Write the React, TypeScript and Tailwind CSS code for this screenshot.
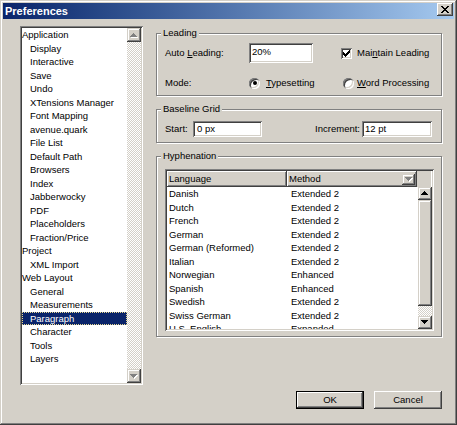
import React from "react";

const raised =
  "bg-[#d4d0c8] shadow-[inset_-1px_-1px_#404040,inset_1px_1px_#ffffff,inset_-2px_-2px_#808080,inset_2px_2px_#d4d0c8]";
const scrollBtn =
  "bg-[#d4d0c8] shadow-[inset_-1px_-1px_#404040,inset_1px_1px_#d4d0c8,inset_-2px_-2px_#808080,inset_2px_2px_#ffffff]";
const sunken =
  "shadow-[inset_1px_1px_#808080,inset_-1px_-1px_#ffffff,inset_2px_2px_#404040,inset_-2px_-2px_#d4d0c8]";
const dither =
  "bg-[image:repeating-conic-gradient(#ffffff_0%_25%,#d4d0c8_0%_50%)] bg-[length:2px_2px]";

function Arrow({ dir, disabled }: { dir: "up" | "down"; disabled?: boolean }) {
  const pts = dir === "up" ? "3.5,0 7,4 0,4" : "0,0 7,0 3.5,4";
  return (
    <svg width="8" height="5" viewBox="0 0 8 5" shapeRendering="crispEdges">
      {disabled && <polygon points={pts} transform="translate(1,1)" fill="#ffffff" />}
      <polygon points={pts} fill={disabled ? "#808080" : "#000000"} />
    </svg>
  );
}

function Group({
  title,
  className,
  innerClassName,
  children,
}: {
  title: string;
  className: string;
  innerClassName: string;
  children: React.ReactNode;
}) {
  return (
    <div
      className={
        "mt-[6px] border border-[#808080] shadow-[1px_1px_0_#ffffff,inset_1px_1px_0_#ffffff] " +
        className
      }
    >
      <div className="-mt-[7px] ml-[4px] px-[2px] w-fit bg-[#d4d0c8] leading-[12px]">{title}</div>
      <div className={innerClassName}>{children}</div>
    </div>
  );
}

function Checkbox() {
  return (
    <div className={"w-[11px] h-[11px] bg-white flex items-center justify-center " + sunken}>
      <svg width="7" height="7" viewBox="0 0 7 7" shapeRendering="crispEdges">
        <path d="M0 2h1v1h1v1h1V3h1V2h1V1h1V0h1v3H6v1H5v1H4v1H3v1H2V6H1V5H0z" fill="#000" />
      </svg>
    </div>
  );
}

function Radio({ checked }: { checked?: boolean }) {
  return (
    <div
      className={
        "w-[11px] h-[11px] rounded-full bg-white flex items-center justify-center " + sunken
      }
    >
      {checked && <div className="w-[4px] h-[4px] rounded-full bg-black" />}
    </div>
  );
}

const treeItems: [string, boolean][] = [
  ["Application", false],
  ["Display", true],
  ["Interactive", true],
  ["Save", true],
  ["Undo", true],
  ["XTensions Manager", true],
  ["Font Mapping", true],
  ["avenue.quark", true],
  ["File List", true],
  ["Default Path", true],
  ["Browsers", true],
  ["Index", true],
  ["Jabberwocky", true],
  ["PDF", true],
  ["Placeholders", true],
  ["Fraction/Price", true],
  ["Project", false],
  ["XML Import", true],
  ["Web Layout", false],
  ["General", true],
  ["Measurements", true],
  ["Paragraph", true],
  ["Character", true],
  ["Tools", true],
  ["Layers", true],
];

const hyph: [string, string][] = [
  ["Danish", "Extended 2"],
  ["Dutch", "Extended 2"],
  ["French", "Extended 2"],
  ["German", "Extended 2"],
  ["German (Reformed)", "Extended 2"],
  ["Italian", "Extended 2"],
  ["Norwegian", "Enhanced"],
  ["Spanish", "Enhanced"],
  ["Swedish", "Extended 2"],
  ["Swiss German", "Extended 2"],
  ["U.S. English", "Expanded"],
];

export default function App() {
  return (
    <div className="w-[457px] h-[425px] bg-[#d4d0c8] p-[3px] flex flex-col font-['Liberation_Sans',Arial,sans-serif] text-[9.5px] text-black leading-[13.5px] overflow-hidden select-none shadow-[inset_-1px_-1px_#404040,inset_1px_1px_#d4d0c8,inset_-2px_-2px_#808080,inset_2px_2px_#ffffff]">
      {/* Title bar */}
      <div className="h-[16px] shrink-0 flex items-start justify-between bg-linear-to-r from-[#0a246a] to-[#a6caf0] pl-[2px] pr-[1px]">
        <span className="text-white font-bold text-[11px] leading-[16px]">Preferences</span>
        <div className={"w-[16px] h-[13px] flex items-center justify-center " + raised}>
          <svg width="8" height="7" viewBox="0 0 8 7" shapeRendering="crispEdges">
            <path
              d="M0 0h2v1h1v1h2V1h1V0h2v1H7v1H6v1H5v1h1v1h1v1h1v1H6V6H5V5H3v1H2v1H0V6h1V5h1V4h1V3H2V2H1V1H0z"
              fill="#000"
            />
          </svg>
        </div>
      </div>

      {/* Body */}
      <div className="flex-1 flex flex-col pl-[17px] pr-[12px] pt-[7px]">
        <div className="flex gap-[13px]">
          {/* Tree list */}
          <div className={"w-[123px] h-[359px] shrink-0 bg-white p-[2px] flex " + sunken}>
            <div className="flex-1 overflow-hidden">
              {treeItems.map(([label, indent]) => {
                const sel = label === "Paragraph";
                return (
                  <div
                    key={label}
                    className={
                      "h-[13.5px] whitespace-nowrap " +
                      (indent ? "pl-[8px] " : "pl-0 ") +
                      (sel
                        ? "bg-[#0a246a] text-white outline-1 outline-dotted outline-[#e8d890] -outline-offset-1"
                        : "")
                    }
                  >
                    {label}
                  </div>
                );
              })}
            </div>
            <div className={"w-[14px] flex flex-col " + dither}>
              <div className={"h-[14px] flex items-center justify-center " + scrollBtn}>
                <Arrow dir="up" disabled />
              </div>
              <div className="flex-1" />
              <div className={"h-[14px] flex items-center justify-center " + scrollBtn}>
                <Arrow dir="down" disabled />
              </div>
            </div>
          </div>

          {/* Right column */}
          <div className="w-[286px] mt-[1px] flex flex-col gap-[7px]">
            <Group title="Leading" className="pb-[5px]" innerClassName="pt-[4px] pl-[8px]">
              <div className="grid grid-cols-[84px_92px_1fr] items-center h-[20px]">
                <span>
                  Auto <span className="underline">L</span>eading:
                </span>
                <div className={"w-[64px] h-[20px] bg-white pl-[3px] pt-[2px] " + sunken}>20%</div>
                <div className="flex items-center gap-[5px]">
                  <Checkbox />
                  <span>
                    Mai<span className="underline">n</span>tain Leading
                  </span>
                </div>
              </div>
              <div className="grid grid-cols-[84px_94px_1fr] items-center mt-[13px] h-[14px]">
                <span>Mode:</span>
                <div className="flex items-center gap-[6px]">
                  <Radio checked />
                  <span>
                    <span className="underline">T</span>ypesetting
                  </span>
                </div>
                <div className="flex items-center gap-[3px]">
                  <Radio />
                  <span>
                    <span className="underline">W</span>ord Processing
                  </span>
                </div>
              </div>
            </Group>

            <Group title="Baseline Grid" className="pb-[5px]" innerClassName="pt-[6px] pl-[8px] pr-[9px]">
              <div className="flex items-center h-[16px]">
                <span className="w-[28px]">Start:</span>
                <div className={"w-[69px] h-[16px] bg-white pl-[4px] leading-[16px] " + sunken}>
                  0 px
                </div>
                <span className="ml-auto mr-[2px]">Increment:</span>
                <div className={"w-[70px] h-[16px] bg-white pl-[3px] leading-[16px] " + sunken}>
                  12 pt
                </div>
              </div>
            </Group>

            <Group title="Hyphenation" className="pb-[5px]" innerClassName="pt-[7px] pl-[8px] pr-[7px]">
              <div className={"h-[162px] bg-white p-[2px] flex flex-col " + sunken}>
                <div className="h-[16px] shrink-0 flex">
                  <div className={"w-[120px] pl-[2px] leading-[16px] " + raised}>Language</div>
                  <div className={"w-[130px] pl-[2px] flex items-center justify-between pr-[2px] " + raised}>
                    <span className="leading-[16px]">Method</span>
                    <div className={"w-[13px] h-[11px] flex items-center justify-center " + scrollBtn}>
                      <Arrow dir="down" disabled />
                    </div>
                  </div>
                  <div className="w-[14px] bg-[#d4d0c8]" />
                </div>
                <div className="flex-1 min-h-0 flex">
                  <div className="flex-1 overflow-hidden">
                    {hyph.map(([lang, method]) => (
                      <div key={lang} className="h-[13.5px] flex whitespace-nowrap">
                        <span className="w-[120px] pl-[2px]">{lang}</span>
                        <span className="pl-[4px]">{method}</span>
                      </div>
                    ))}
                  </div>
                  <div className="w-[14px] flex flex-col">
                    <div className={"h-[13px] flex items-center justify-center " + scrollBtn}>
                      <Arrow dir="up" />
                    </div>
                    <div className={"h-[106px] " + scrollBtn} />
                    <div className={"flex-1 " + dither} />
                    <div className={"h-[13px] flex items-center justify-center " + scrollBtn}>
                      <Arrow dir="down" />
                    </div>
                  </div>
                </div>
              </div>
            </Group>
          </div>
        </div>

        {/* Buttons */}
        <div className="flex justify-end gap-[10px] mt-[6px]">
          <div className="w-[68px] h-[18px] border border-black">
            <div className={"w-full h-full flex items-center justify-center " + raised}>OK</div>
          </div>
          <div className={"w-[68px] h-[18px] flex items-center justify-center " + raised}>Cancel</div>
        </div>
      </div>
    </div>
  );
}
